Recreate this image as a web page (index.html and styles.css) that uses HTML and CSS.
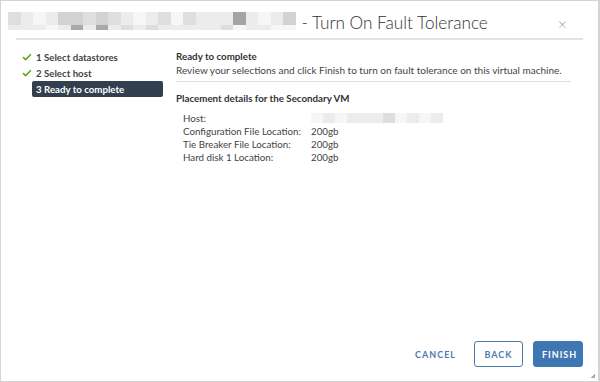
FILE: index.html
```html
<!DOCTYPE html>
<html lang="en">
<head>
<meta charset="UTF-8">
<title>Turn On Fault Tolerance</title>
<link rel="stylesheet" href="styles.css">
</head>
<body>

<div class="dialog">
    <div class="header">
        <div class="blurred">
            <div class="mosaic-row top">
                <span class="g2"></span><span class="g1"></span><span class="g0"></span><span class="g1"></span><span class="g3"></span><span class="g3"></span><span class="g2"></span><span class="g3"></span><span class="g2"></span><span class="g1"></span><span class="g0"></span><span class="g1"></span><span class="g2"></span><span class="g0"></span><span class="g2"></span><span class="g1"></span><span class="g1"></span><span class="g1"></span><span class="g5"></span><span class="g1"></span><span class="g0"></span><span class="g1"></span><span class="g3"></span>
            </div>
            <div class="mosaic-row bottom">
                <span class="g1"></span><span class="g1"></span><span class="g1"></span><span class="g0"></span><span class="g1"></span><span class="g4"></span><span class="g1"></span><span class="g4"></span><span class="g1"></span><span class="g2"></span><span class="g1"></span><span class="g2"></span><span class="g1"></span><span class="g1"></span><span class="g1"></span><span class="g1"></span><span class="g1"></span><span class="g2"></span><span class="g0"></span><span class="g1"></span><span class="g1"></span><span class="g0"></span><span class="g0"></span>
            </div>
        </div>
        <div class="title">- Turn On Fault Tolerance</div>
        <div class="close">&times;</div>
    </div>
    <div class="header-rule"></div>

    <div class="main">
        <div class="steps">
            <div class="step done">
                <svg class="check" width="10" height="8" viewBox="0 0 10 8"><path d="M1 4.2 L3.6 6.6 L9 1.2" fill="none" stroke="#62a420" stroke-width="1.6"/></svg>
                1 Select datastores
            </div>
            <div class="step done">
                <svg class="check" width="10" height="8" viewBox="0 0 10 8"><path d="M1 4.2 L3.6 6.6 L9 1.2" fill="none" stroke="#62a420" stroke-width="1.6"/></svg>
                2 Select host
            </div>
            <div class="step active">3 Ready to complete</div>
        </div>

        <div class="content">
            <div class="heading">Ready to complete</div>
            <div class="desc">Review your selections and click Finish to turn on fault tolerance on this virtual machine.</div>
            <div class="rule"></div>
            <div class="heading">Placement details for the Secondary VM</div>

            <div class="details">
                <div class="label">Host:</div>
                <div class="value"><div class="blur-value"><span class="g0"></span><span class="g1"></span><span class="g0"></span><span class="g1"></span><span class="g1"></span><span class="g1"></span><span class="g2"></span><span class="g0"></span><span class="g1"></span><span class="g0"></span><span class="g1"></span></div></div>
                <div class="label">Configuration File Location:</div>
                <div class="value">200gb</div>
                <div class="label">Tie Breaker File Location:</div>
                <div class="value">200gb</div>
                <div class="label">Hard disk 1 Location:</div>
                <div class="value">200gb</div>
            </div>
        </div>
    </div>

    <div class="footer">
        <button class="btn btn-link">CANCEL</button>
        <button class="btn btn-outline">BACK</button>
        <button class="btn btn-primary">FINISH</button>
    </div>
    <div class="grip"></div>
</div>

</body>
</html>
```

FILE: styles.css
```css
body {
    margin: 0;
    font-family: 'Lato', 'Open Sans', sans-serif;
    color: #333;
    background: #fff;
}

.dialog {
    position: relative;
    width: 600px;
    height: 382px;
    box-sizing: border-box;
    border: 1px solid #d4d4d4;
    border-right-width: 2px;
    display: flex;
    flex-direction: column;
}

/* Header */
.header {
    display: flex;
    align-items: center;
    height: 36px;
    padding: 0 0 0 7px;
}

.blurred {
    display: flex;
    flex-direction: column;
    margin-top: 4px;
}

.mosaic-row {
    display: flex;
}

.mosaic-row span {
    width: 12.5px;
    display: block;
}

.mosaic-row.top span {
    height: 13px;
}

.mosaic-row.bottom span {
    height: 5px;
}

.g0 { background: #f6f6f6; }
.g1 { background: #ececec; }
.g2 { background: #dedede; }
.g3 { background: #d2d2d2; }
.g4 { background: #a9a9a9; }
.g5 { background: #a4a4a4; }

.title {
    font-size: 17.2px;
    font-weight: 300;
    color: #333;
    margin-left: 6px;
    margin-top: 6px;
}

.close {
    margin-left: auto;
    margin-right: 31px;
    margin-top: 8px;
    font-size: 16px;
    font-weight: 300;
    color: #999;
}

.header-rule {
    height: 2px;
    background: #e2e2e2;
    margin: 1px 15px 0 15px;
}

/* Body */
.main {
    display: flex;
    flex: 1;
}

.steps {
    width: 141px;
    padding: 9px 0 0 21px;
    font-size: 9.7px;
    font-weight: bold;
    color: #444;
}

.step {
    display: flex;
    align-items: center;
    height: 16px;
}

.check {
    margin-right: 4px;
}

.step.active {
    margin-left: 10px;
    padding-left: 4px;
    background: #313f4e;
    color: #fff;
    border-radius: 2px;
}

.content {
    padding: 10px 0 0 13px;
    font-size: 9.75px;
    flex: 1;
}

.heading {
    font-weight: bold;
    color: #333;
    line-height: 13px;
}

.desc {
    color: #444;
    line-height: 15px;
    font-size: 10px;
}

.rule {
    height: 1px;
    background: #ddd;
    margin: 3px 27px 10px 0;
}

.details {
    display: grid;
    grid-template-columns: 128px auto;
    margin: 7px 0 0 7px;
    line-height: 13px;
    color: #444;
}

.blur-value {
    display: flex;
    margin-top: 1px;
}

.blur-value span {
    display: block;
    width: 12px;
    height: 10px;
}

/* Footer */
.footer {
    display: flex;
    justify-content: flex-end;
    align-items: center;
    gap: 10px;
    padding: 0 15px 14px 0;
}

.btn {
    height: 26px;
    font-family: 'Lato', sans-serif;
    font-size: 9px;
    font-weight: bold;
    letter-spacing: 1px;
    border-radius: 3px;
    padding: 0 8px;
    cursor: pointer;
}

.btn-link {
    border: none;
    background: none;
    color: #4d7cab;
    margin-right: 0;
}

.btn-outline {
    width: 49px;
    border: 1px solid #4d7cab;
    background: #fff;
    color: #4d7cab;
}

.btn-primary {
    width: 50px;
    border: 1px solid #3f77b3;
    background: #3f77b3;
    color: #fff;
}

.grip {
    position: absolute;
    right: 3px;
    bottom: 3px;
    width: 4px;
    height: 4px;
    background: linear-gradient(135deg, transparent 50%, #aaa 50%);
}
```
